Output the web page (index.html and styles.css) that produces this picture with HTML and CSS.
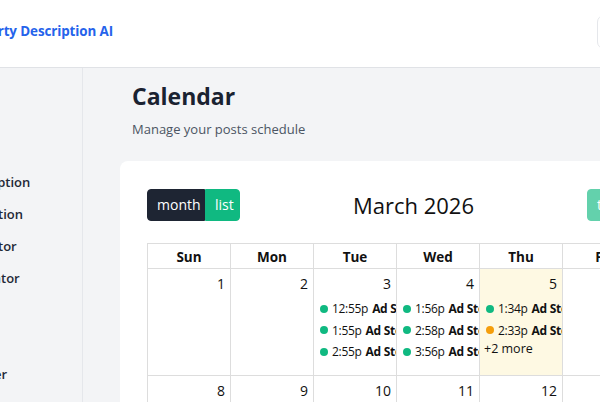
FILE: index.html
```html
<!DOCTYPE html>
<html lang="en">
<head>
<meta charset="utf-8">
<title>Calendar</title>
<link rel="stylesheet" href="styles.css">
</head>
<body>
<div class="viewport">
  <div class="page">
    <header class="topbar">
      <div class="brand">Property Description AI</div>
      <div class="top-spacer"></div>
      <button class="user-btn" aria-label="Account"></button>
    </header>
    <div class="layout">
      <aside class="sidebar">
        <nav class="nav">
          <a class="nav-item">Dashboard</a>
          <a class="nav-item">Listings</a>
          <a class="nav-item">Property Description</a>
          <a class="nav-item">Listings Description</a>
          <a class="nav-item">Caption Generator</a>
          <a class="nav-item">Hashtag Generator</a>
          <a class="nav-item">Calendar</a>
          <a class="nav-item">Posts</a>
          <a class="nav-item">Listing Scheduler</a>
        </nav>
      </aside>
      <main class="main">
        <div class="page-head">
          <h1 class="page-title">Calendar</h1>
          <p class="page-sub">Manage your posts schedule</p>
        </div>
        <section class="card">
          <div class="toolbar">
            <div class="btn-group">
              <button class="btn btn-dark">month</button>
              <button class="btn btn-green">list</button>
            </div>
            <h2 class="cal-title">March 2026</h2>
            <div class="toolbar-right">
              <button class="btn btn-today">today</button>
              <div class="btn-group">
                <button class="btn btn-green">&lsaquo;</button>
                <button class="btn btn-green">&rsaquo;</button>
              </div>
            </div>
          </div>
          <table class="cal">
            <thead>
              <tr>
                <th>Sun</th><th>Mon</th><th>Tue</th><th>Wed</th><th>Thu</th><th>Fri</th><th>Sat</th>
              </tr>
            </thead>
            <tbody>
              <tr class="week">
                <td><div class="day-num">1</div></td>
                <td><div class="day-num">2</div></td>
                <td>
                  <div class="day-num">3</div>
                  <div class="ev"><span class="dot"></span><span class="ev-time">12:55p</span><b class="ev-title">Ad Story</b></div>
                  <div class="ev"><span class="dot"></span><span class="ev-time">1:55p</span><b class="ev-title">Ad Story</b></div>
                  <div class="ev"><span class="dot"></span><span class="ev-time">2:55p</span><b class="ev-title">Ad Story</b></div>
                </td>
                <td>
                  <div class="day-num">4</div>
                  <div class="ev"><span class="dot"></span><span class="ev-time">1:56p</span><b class="ev-title">Ad Story</b></div>
                  <div class="ev"><span class="dot"></span><span class="ev-time">2:58p</span><b class="ev-title">Ad Story</b></div>
                  <div class="ev"><span class="dot"></span><span class="ev-time">3:56p</span><b class="ev-title">Ad Story</b></div>
                </td>
                <td class="today">
                  <div class="day-num">5</div>
                  <div class="ev"><span class="dot"></span><span class="ev-time">1:34p</span><b class="ev-title">Ad Story</b></div>
                  <div class="ev"><span class="dot dot-orange"></span><span class="ev-time">2:33p</span><b class="ev-title">Ad Story</b></div>
                  <div class="more">+2 more</div>
                </td>
                <td><div class="day-num">6</div></td>
                <td><div class="day-num">7</div></td>
              </tr>
              <tr class="week">
                <td><div class="day-num">8</div></td>
                <td><div class="day-num">9</div></td>
                <td><div class="day-num">10</div></td>
                <td><div class="day-num">11</div></td>
                <td><div class="day-num">12</div></td>
                <td><div class="day-num">13</div></td>
                <td><div class="day-num">14</div></td>
              </tr>
            </tbody>
          </table>
        </section>
      </main>
    </div>
  </div>
</div>
</body>
</html>
```
FILE: styles.css
```css
* { box-sizing: border-box; }
html, body { margin: 0; padding: 0; }
body {
  font-family: "Open Sans", "Noto Sans", sans-serif;
  color: #111827;
  background: #f3f4f6;
}
.viewport {
  width: 600px;
  height: 402px;
  overflow: hidden;
}
.page {
  margin-left: -173px;
  width: 960px;
}
.topbar {
  height: 68px;
  background: #ffffff;
  border-bottom: 1px solid #e0e2e6;
  display: flex;
  align-items: center;
  padding: 0 24px 0 132px;
}
.brand {
  color: #2563eb;
  font-weight: 700;
  font-size: 13.4px;
  letter-spacing: -0.1px;
  margin-top: -5px;
}
.top-spacer { flex: 1; }
.user-btn {
  width: 166px;
  height: 34px;
  border: 1px solid #e5e7eb;
  border-radius: 7px;
  background: #ffffff;
  margin-top: -4px;
}
.layout {
  display: flex;
  height: 340px;
}
.sidebar {
  width: 256px;
  flex: none;
  border-right: 1px solid #e5e7eb;
  background: #f3f4f6;
}
.nav {
  display: flex;
  flex-direction: column;
  padding: 34px 0 0 73px;
}
.nav-item {
  display: block;
  height: 32px;
  line-height: 32px;
  font-size: 13px;
  font-weight: 600;
  color: #1f2937;
  white-space: nowrap;
}
.main {
  flex: 1;
  padding: 12px 0 0 37px;
}
.page-head {
  padding-left: 12px;
}
.page-title {
  margin: 0;
  font-size: 23px;
  line-height: 32px;
  font-weight: 700;
  color: #1a2231;
}
.page-sub {
  margin: 8px 0 0;
  font-size: 13px;
  line-height: 18px;
  color: #4b5563;
}
.card {
  margin-top: 23px;
  background: #ffffff;
  border-radius: 8px;
  padding: 28px 27px 0;
  width: 635px;
  height: 260px;
}
.toolbar {
  display: flex;
  justify-content: space-between;
  align-items: center;
  height: 32px;
  margin-bottom: 22px;
}
.btn-group { display: flex; }
.btn {
  height: 32px;
  border: 1px solid transparent;
  font-family: "Open Sans", sans-serif;
  font-size: 14px;
  line-height: 20px;
  padding: 0 9px;
  color: #ffffff;
  cursor: pointer;
}
.btn-group .btn:first-child { border-radius: 4px 0 0 4px; }
.btn-group .btn:last-child { border-radius: 0 4px 4px 0; }
.btn-dark { background: #1e2533; border-color: #1e2533; width: 58px; }
.btn-green { background: #10b981; border-color: #10b981; }
.btn-group .btn-green { width: 35px; }
.btn-today {
  background: #10b981;
  border-color: #10b981;
  opacity: 0.65;
  border-radius: 4px;
  margin-right: 15px;
  width: 56px;
}
.toolbar-right { display: flex; }
.cal-title {
  margin: 0;
  font-size: 22px;
  font-weight: 400;
  line-height: 32px;
  color: #111111;
}
.cal {
  border-collapse: collapse;
  table-layout: fixed;
  width: 581px;
  font-size: 13px;
  color: #111111;
}
.cal th, .cal td {
  border: 1px solid #dddddd;
  width: 83px;
  padding: 0;
}
.cal th {
  height: 25px;
  font-size: 13.5px;
  font-weight: 700;
  line-height: 20px;
  text-align: center;
  padding-top: 2px;
}
.cal td {
  height: 107px;
  vertical-align: top;
  overflow: hidden;
}
.cal td.today { background: #fef9e3; }
.day-num {
  text-align: right;
  padding: 4px 5px 4px 4px;
  font-size: 14px;
  line-height: 21px;
}
.ev {
  display: flex;
  align-items: center;
  height: 21.5px;
  margin-left: 2px;
  white-space: nowrap;
  overflow: hidden;
  font-size: 12px;
  letter-spacing: -0.3px;
}
.dot {
  flex: none;
  width: 8px;
  height: 8px;
  border-radius: 50%;
  background: #10b981;
  margin: 0 4px;
}
.dot-orange { background: #f59e0b; }
.ev-time { margin-right: 4px; }
.ev-title { font-weight: 700; }
.more {
  padding-left: 4px;
  font-size: 12.5px;
  line-height: 18px;
  margin-top: -1px;
}
```
